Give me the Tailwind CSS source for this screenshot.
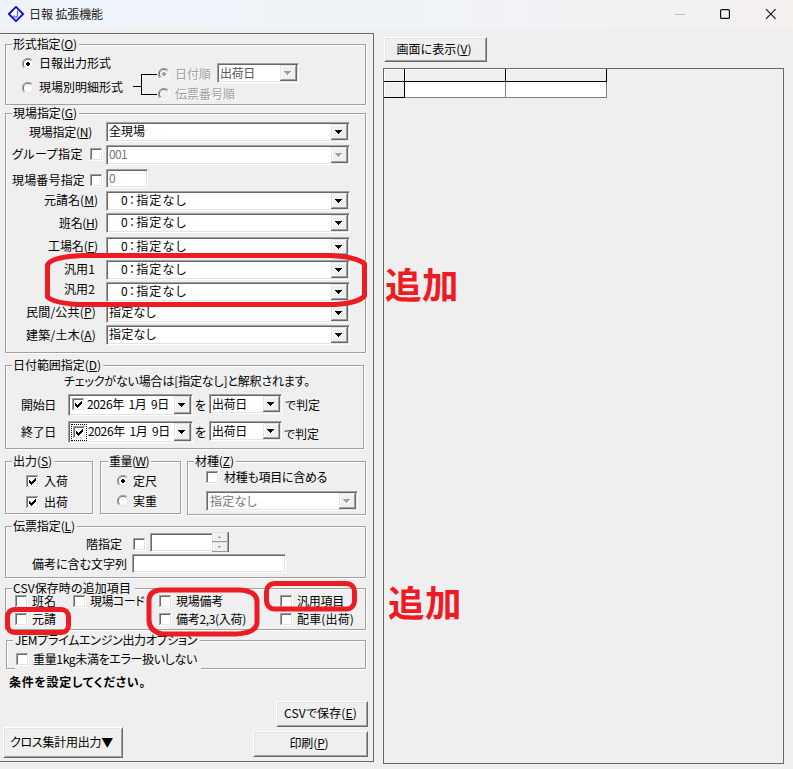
<!DOCTYPE html>
<html lang="ja">
<head>
<meta charset="utf-8">
<title>日報 拡張機能</title>
<script src="https://cdn.jsdelivr.net/npm/@tailwindcss/browser@4"></script>
</head>
<body class="relative flex h-[769px] w-[793px] flex-col overflow-hidden bg-[#efefef] font-['Noto_Sans_CJK_JP','Liberation_Sans',sans-serif] text-[12px] leading-[16px] whitespace-nowrap text-black [font-feature-settings:'palt'] [&_[data-w]]:whitespace-pre [&_button]:pr-[3px] [&_button]:pb-[2px]">

<!-- shared control glyphs -->
<svg class="hidden">
  <symbol id="btn" viewBox="0 0 17 16" preserveAspectRatio="none"><path fill="#696969" d="M0 0h17v16H0z"/><path fill="#e3e3e3" d="M0 0h16v15H0z"/><path fill="#a0a0a0" d="M1 1h15v14H1z"/><path fill="#fff" d="M1 1h14v13H1z"/><path fill="#efefef" d="M2 2h13v12H2z"/></symbol>
  <symbol id="dd" viewBox="0 0 17 16"><use href="#btn" width="17" height="16"/><path d="M4 6h7v1h-1v1h-1v1h-1v1h-1v-1h-1v-1h-1v-1h-1z" shape-rendering="crispEdges"/></symbol>
  <symbol id="ddoff" viewBox="0 0 17 16"><use href="#btn" width="17" height="16"/><path fill="#fff" d="M5 7h7v1h-1v1h-1v1h-1v1h-1v-1h-1v-1h-1v-1h-1z"/><path fill="#a0a0a0" d="M4 6h7v1h-1v1h-1v1h-1v1h-1v-1h-1v-1h-1v-1h-1z"/></symbol>
  <symbol id="cb" viewBox="0 0 13 13"><path fill="#fff" d="M0 0h13v13H0z"/><path fill="#a0a0a0" d="M0 0h12v1H1v11H0z"/><path fill="#e3e3e3" d="M11 1h1v11H1v-1h10z"/><path fill="#696969" d="M1 1h10v1H2v9H1z"/></symbol>
  <symbol id="cbon" viewBox="0 0 13 13"><use href="#cb" width="13" height="13"/><path d="M3 5h1v1h1v1h1v-1h1v-1h1v-1h1v-1h1v3h-1v1h-1v1h-1v1h-1v1h-1v-1h-1v-1h-1z"/></symbol>
  <symbol id="rb" viewBox="0 0 12 12"><circle cx="6" cy="6" r="5" fill="#fff"/><g fill="none"><path d="M1.9 10.1A5.5 5.5 0 0 1 10 1.9" stroke="#a0a0a0"/><path d="M2.6 9.2A4.6 4.6 0 0 1 9.2 2.7" stroke="#696969"/><path d="M2.6 9.4A4.8 4.8 0 0 0 9.4 2.6" stroke="#e3e3e3"/></g></symbol>
  <symbol id="rboff" viewBox="0 0 12 12"><circle cx="6" cy="6" r="5" fill="#efefef"/><g fill="none"><path d="M1.9 10.1A5.5 5.5 0 0 1 10 1.9" stroke="#a0a0a0"/><path d="M2.6 9.2A4.6 4.6 0 0 1 9.2 2.7" stroke="#696969"/><path d="M2.2 10A5.4 5.4 0 0 0 10 2.2" stroke="#fff"/></g></symbol>
  <symbol id="dot" viewBox="0 0 12 12"><path d="M5 4h2v1h1v2h-1v1h-2v-1h-1v-2h1z"/></symbol>
</svg>

<header class="flex h-[29px] shrink-0 items-center bg-linear-to-r from-[#eff4fa] via-[#eff3f8] to-[#f4f1ef] pl-[8px]">
  <svg class="-mt-[2px] h-[16px] w-[16px]" viewBox="0 0 16 16"><path d="M8 .9 15.1 8 8 15.1.9 8z" fill="#fff" stroke="#0a10c8" stroke-width="1.8" stroke-linejoin="round"/><path d="M9.5 4.5v4.800q0 1.900-1.800 1.900T5.800 9.400" fill="none" stroke="#5a5cf0" stroke-width="1.3"/></svg>
  <h1 class="-mt-[2px] ml-[5px] text-[12px] text-[#222]" data-w="74">日報 拡張機能</h1>
  <svg class="-mt-[2px] ml-auto h-[12px] w-[118px]" viewBox="0 0 118 12" fill="none"><path d="M0 6.500h10" stroke="#bdbdbd"/><rect x="45.600" y="1.600" width="8.800" height="8.800" rx="1" stroke="#111" stroke-width="1.200"/><path d="m91 1.200 9.600 9.600m0-9.600L91 10.800" stroke="#111" stroke-width="1.100"/></svg>
</header>

<div class="flex flex-1 items-start">
  <!-- conditions -->
  <main class="mt-[4px] h-[729px] w-[374px] border border-l-0 border-[#696969] pt-[2px]">

    <fieldset class="ml-[5px] h-[69px] w-[361px] border border-[#a0a0a0] shadow-[1px_1px_#fff,inset_1px_1px_#fff]">
      <legend class="ml-[6px] h-[17px] bg-[#efefef] pr-[2px] pl-px"><span data-w="64">形式指定(<u>O</u>)</span></legend>
      <div class="flex">
        <div class="w-[127px] pt-[2px] pl-[16px]">
          <label class="flex h-[24px] items-start gap-[5px]"><svg class="mt-[3px] h-[12px] w-[12px]"><use href="#rb"/><use href="#dot"/></svg><span data-w="72">日報出力形式</span></label>
          <label class="flex h-[16px] items-start gap-[5px]"><svg class="mt-[3px] h-[12px] w-[12px]"><use href="#rb"/></svg><span data-w="84">現場別明細形式</span></label>
        </div>
        <svg class="mt-[20px] h-[22px] w-[25px]" viewBox="0 0 25 22" shape-rendering="crispEdges"><path d="M0 13h8v1H0zM8 1h16v1H9v19h15v1H8z"/></svg>
        <div class="pt-[10px] text-[#a0a0a0]">
          <div class="flex h-[20px] items-start">
            <svg class="mt-[5px] h-[12px] w-[12px] text-[#a0a0a0]"><use href="#rboff"/><use href="#dot" fill="#a0a0a0"/></svg>
            <span class="mt-[3px] ml-[5px] w-[42px] [text-shadow:1px_1px_#fff]"><span data-w="36">日付順</span></span>
            <div class="flex h-[20px] w-[82px] justify-between border border-[#a0a0a0] border-r-white border-b-white bg-white pt-px pr-px pl-[2px] text-[#555] shadow-[inset_1px_1px_#696969,inset_-1px_-1px_#e3e3e3]"><span data-w="35">出荷日</span><svg class="h-[16px] w-[17px]"><use href="#ddoff"/></svg></div>
          </div>
          <div class="flex h-[20px] items-start">
            <svg class="mt-[5px] h-[12px] w-[12px]"><use href="#rboff"/></svg>
            <span class="mt-[3px] ml-[5px] [text-shadow:1px_1px_#fff]" data-w="60">伝票番号順</span>
          </div>
        </div>
      </div>
    </fieldset>

    <fieldset class="ml-[5px] h-[248px] w-[361px] border border-[#a0a0a0] shadow-[1px_1px_#fff,inset_1px_1px_#fff]">
      <legend class="ml-[6px] h-[17px] bg-[#efefef] pr-[2px] pl-px"><span data-w="64">現場指定(<u>G</u>)</span></legend>
      <div class="flex h-[23px] items-start">
        <div class="mt-[2px] w-[100px] pr-[14px] text-right"><span data-w="63">現場指定(<u>N</u>)</span></div>
        <div class="flex h-[20px] w-[244px] justify-between border border-[#a0a0a0] border-r-white border-b-white bg-white pt-px pr-px pl-[2px] shadow-[inset_1px_1px_#696969,inset_-1px_-1px_#e3e3e3]"><span class="-mt-px" data-w="36">全現場</span><svg class="h-[16px] w-[17px]"><use href="#dd"/></svg></div>
      </div>
      <div class="flex h-[24px] items-start">
        <div class="mt-px w-[84px] pl-[6px]"><span data-w="71">グループ指定</span></div><svg class="mt-[3px] mr-[3px] h-[13px] w-[13px]"><use href="#cb"/></svg>
        <div class="flex h-[20px] w-[244px] justify-between border border-[#a0a0a0] border-r-white border-b-white bg-white pt-px pr-px pl-[2px] text-[#777] shadow-[inset_1px_1px_#696969,inset_-1px_-1px_#e3e3e3]"><span class="-mt-px" data-w="18">001</span><svg class="h-[16px] w-[17px]"><use href="#ddoff"/></svg></div>
      </div>
      <div class="flex h-[22px] items-start">
        <div class="mt-[3px] w-[84px] pl-[6px]"><span data-w="73">現場番号指定</span></div><svg class="mt-[5px] mr-[3px] h-[13px] w-[13px]"><use href="#cb"/></svg>
        <div class="h-[19px] w-[42px] border border-[#a0a0a0] border-r-white border-b-white bg-white pl-[2px] text-[#777] shadow-[inset_1px_1px_#696969,inset_-1px_-1px_#e3e3e3]"><span data-w="6">0</span></div>
      </div>
      <div class="flex h-[22px] items-start">
        <div class="mt-px w-[100px] pr-[8px] text-right"><span data-w="54">元請名(<u>M</u>)</span></div>
        <div class="flex h-[20px] w-[244px] justify-between border border-[#a0a0a0] border-r-white border-b-white bg-white pt-px pr-px pl-[14px] shadow-[inset_1px_1px_#696969,inset_-1px_-1px_#e3e3e3]"><span class="-mt-px" data-w="66">0：指定なし</span><svg class="h-[16px] w-[17px]"><use href="#dd"/></svg></div>
      </div>
      <div class="flex h-[24px] items-start">
        <div class="mt-[2px] w-[100px] pr-[8px] text-right"><span data-w="39">班名(<u>H</u>)</span></div>
        <div class="flex h-[20px] w-[244px] justify-between border border-[#a0a0a0] border-r-white border-b-white bg-white pt-px pr-px pl-[14px] shadow-[inset_1px_1px_#696969,inset_-1px_-1px_#e3e3e3]"><span class="-mt-px" data-w="66">0：指定なし</span><svg class="h-[16px] w-[17px]"><use href="#dd"/></svg></div>
      </div>
      <div class="flex h-[23px] items-start">
        <div class="mt-px w-[100px] pr-[8px] text-right"><span data-w="50">工場名(<u>F</u>)</span></div>
        <div class="flex h-[20px] w-[244px] justify-between border border-[#a0a0a0] border-r-white border-b-white bg-white pt-px pr-px pl-[14px] shadow-[inset_1px_1px_#696969,inset_-1px_-1px_#e3e3e3]"><span class="-mt-px" data-w="66">0：指定なし</span><svg class="h-[16px] w-[17px]"><use href="#dd"/></svg></div>
      </div>
      <div class="flex h-[22px] items-start">
        <div class="mt-px w-[100px] pr-[11px] text-right"><span data-w="31">汎用1</span></div>
        <div class="flex h-[20px] w-[244px] justify-between border border-[#a0a0a0] border-r-white border-b-white bg-white pt-px pr-px pl-[14px] shadow-[inset_1px_1px_#696969,inset_-1px_-1px_#e3e3e3]"><span class="-mt-px" data-w="66">0：指定なし</span><svg class="h-[16px] w-[17px]"><use href="#dd"/></svg></div>
      </div>
      <div class="flex h-[21px] items-start">
        <div class="-mt-px w-[100px] pr-[11px] text-right"><span data-w="31">汎用2</span></div>
        <div class="flex h-[20px] w-[244px] justify-between border border-[#a0a0a0] border-r-white border-b-white bg-white pt-px pr-px pl-[14px] shadow-[inset_1px_1px_#696969,inset_-1px_-1px_#e3e3e3]"><span class="-mt-px" data-w="66">0：指定なし</span><svg class="h-[16px] w-[17px]"><use href="#dd"/></svg></div>
      </div>
      <div class="flex h-[22px] items-start">
        <div class="mt-px w-[100px] pr-[10px] text-right"><span data-w="70">民間/公共(<u>P</u>)</span></div>
        <div class="flex h-[20px] w-[244px] justify-between border border-[#a0a0a0] border-r-white border-b-white bg-white pt-px pr-px pl-[2px] shadow-[inset_1px_1px_#696969,inset_-1px_-1px_#e3e3e3]"><span class="-mt-px" data-w="47">指定なし</span><svg class="h-[16px] w-[17px]"><use href="#dd"/></svg></div>
      </div>
      <div class="flex h-[20px] items-start">
        <div class="mt-[2px] w-[100px] pr-[10px] text-right"><span data-w="70">建築/土木(<u>A</u>)</span></div>
        <div class="flex h-[20px] w-[244px] justify-between border border-[#a0a0a0] border-r-white border-b-white bg-white pt-px pr-px pl-[2px] shadow-[inset_1px_1px_#696969,inset_-1px_-1px_#e3e3e3]"><span class="-mt-px" data-w="47">指定なし</span><svg class="h-[16px] w-[17px]"><use href="#dd"/></svg></div>
      </div>
    </fieldset>

    <fieldset class="mt-[4px] ml-[5px] h-[92px] w-[359px] border border-[#a0a0a0] shadow-[1px_1px_#fff,inset_1px_1px_#fff]">
      <legend class="ml-[6px] h-[17px] bg-[#efefef] pr-[2px] pl-px"><span data-w="88">日付範囲指定(<u>D</u>)</span></legend>
      <p class="-mt-px h-[21px] pl-[58px]"><span data-w="246">チェックがない場合は[指定なし]と解釈されます。</span></p>
      <div class="flex h-[27px] items-start">
        <div class="mt-[3px] w-[62px] pl-[15px]"><span data-w="35">開始日</span></div>
        <div class="flex h-[22px] w-[125px] border border-[#a0a0a0] border-r-white border-b-white bg-white pt-px pr-px pl-[3px] shadow-[inset_1px_1px_#696969,inset_-1px_-1px_#e3e3e3]"><svg class="mt-[2px] mr-[2px] h-[13px] w-[13px]"><use href="#cbon"/></svg><span data-w="82">2026年  1月  9日</span><svg class="ml-auto h-[18px] w-[17px]"><use href="#btn" width="17" height="18"/><use href="#dd" y="1" class="[clip-path:inset(3px)]" width="17" height="16"/></svg></div>
        <div class="mt-[3px] w-[16px] pl-[2px]"><span data-w="11">を</span></div>
        <div class="flex h-[20px] w-[73px] justify-between border border-[#a0a0a0] border-r-white border-b-white bg-white pt-px pr-px pl-[2px] shadow-[inset_1px_1px_#696969,inset_-1px_-1px_#e3e3e3]"><span data-w="35">出荷日</span><svg class="h-[16px] w-[17px]"><use href="#dd"/></svg></div>
        <div class="mt-[3px] pl-[3px]"><span data-w="35">で判定</span></div>
      </div>
      <div class="flex h-[27px] items-start">
        <div class="mt-[3px] w-[62px] pl-[15px]"><span data-w="35">終了日</span></div>
        <div class="flex h-[22px] w-[125px] border border-[#a0a0a0] border-r-white border-b-white bg-white pt-px pr-px pl-[2px] shadow-[inset_1px_1px_#696969,inset_-1px_-1px_#e3e3e3]"><span class="mt-px h-[17px] w-[16px] border border-dotted border-black pt-px pl-px"><svg class="h-[13px] w-[13px]"><use href="#cbon"/></svg></span><span class="ml-px" data-w="82">2026年  1月  9日</span><svg class="ml-auto h-[18px] w-[17px]"><use href="#btn" width="17" height="18"/><use href="#dd" y="1" class="[clip-path:inset(3px)]" width="17" height="16"/></svg></div>
        <div class="mt-[3px] w-[16px] pl-[2px]"><span data-w="11">を</span></div>
        <div class="flex h-[20px] w-[73px] justify-between border border-[#a0a0a0] border-r-white border-b-white bg-white pt-px pr-px pl-[2px] shadow-[inset_1px_1px_#696969,inset_-1px_-1px_#e3e3e3]"><span data-w="35">出荷日</span><svg class="h-[16px] w-[17px]"><use href="#dd"/></svg></div>
        <div class="mt-[5px] pl-[2px]"><span data-w="35">で判定</span></div>
      </div>
    </fieldset>

    <div class="mt-[4px] ml-[5px] flex h-[62px] items-start">
      <fieldset class="h-[61px] w-[88px] border border-[#a0a0a0] shadow-[1px_1px_#fff,inset_1px_1px_#fff]">
        <legend class="ml-[6px] h-[17px] bg-[#efefef] pr-[2px] pl-px"><span data-w="39">出力(<u>S</u>)</span></legend>
        <label class="flex h-[21px] items-start gap-[5px] pt-[3px] pl-[20px]"><svg class="mt-[2px] h-[13px] w-[13px]"><use href="#cbon"/></svg><span data-w="24">入荷</span></label>
        <label class="flex h-[21px] items-start gap-[5px] pt-[3px] pl-[20px]"><svg class="mt-[2px] h-[13px] w-[13px]"><use href="#cbon"/></svg><span data-w="24">出荷</span></label>
      </fieldset>
      <fieldset class="ml-[7px] h-[61px] w-[81px] border border-[#a0a0a0] shadow-[1px_1px_#fff,inset_1px_1px_#fff]">
        <legend class="ml-[7px] h-[17px] bg-[#efefef] pr-[2px] pl-px"><span data-w="40">重量(<u>W</u>)</span></legend>
        <label class="flex h-[20px] items-start gap-[4px] pt-[3px] pl-[16px]"><svg class="mt-[2px] h-[12px] w-[12px]"><use href="#rb"/><use href="#dot"/></svg><span data-w="24">定尺</span></label>
        <label class="flex h-[20px] items-start gap-[4px] pt-[3px] pl-[16px]"><svg class="mt-[2px] h-[12px] w-[12px]"><use href="#rb"/></svg><span data-w="24">実重</span></label>
      </fieldset>
      <fieldset class="ml-[6px] h-[62px] w-[179px] border border-[#a0a0a0] shadow-[1px_1px_#fff,inset_1px_1px_#fff]">
        <legend class="ml-[6px] h-[17px] bg-[#efefef] pr-[2px] pl-px"><span data-w="39">材種(<u>Z</u>)</span></legend>
        <label class="-mt-px flex h-[22px] items-start gap-[5px] pl-[18px]"><svg class="mt-[2px] h-[13px] w-[13px]"><use href="#cb"/></svg><span data-w="103">材種も項目に含める</span></label>
        <div class="ml-[18px] flex h-[20px] w-[152px] justify-between border border-[#a0a0a0] border-r-white border-b-white bg-white pt-px pr-px pl-[3px] text-[#777] shadow-[inset_1px_1px_#696969,inset_-1px_-1px_#e3e3e3]"><span data-w="47">指定なし</span><svg class="h-[16px] w-[17px]"><use href="#ddoff"/></svg></div>
      </fieldset>
    </div>

    <fieldset class="mt-[3px] ml-[5px] h-[60px] w-[361px] border border-[#a0a0a0] shadow-[1px_1px_#fff,inset_1px_1px_#fff]">
      <legend class="ml-[6px] h-[17px] bg-[#efefef] pr-[2px] pl-px"><span data-w="62">伝票指定(<u>L</u>)</span></legend>
      <div class="-mt-[3px] flex h-[22px] items-start">
        <div class="mt-[4px] w-[127px] pl-[80px]"><span data-w="36">階指定</span></div>
        <svg class="mt-[6px] h-[13px] w-[13px]"><use href="#cb"/></svg>
        <div class="mt-px ml-[4px] h-[19px] w-[62px] border border-r-0 border-[#a0a0a0] border-b-white bg-white shadow-[inset_1px_1px_#696969,inset_0_-1px_#e3e3e3]"></div>
        <svg class="h-[20px] w-[17px]" viewBox="0 0 17 20"><use href="#btn" width="17" height="10"/><use href="#btn" y="10" width="17" height="10"/><path fill="#a0a0a0" d="M7 4h1v1h1v1H6V5h1zM6 14h3v1H8v1H7v-1H6z"/></svg>
      </div>
      <div class="flex items-start">
        <div class="mt-[2px] w-[126px] pl-[26px]"><span data-w="95">備考に含む文字列</span></div>
        <div class="h-[19px] w-[154px] border border-[#a0a0a0] border-r-white border-b-white bg-white shadow-[inset_1px_1px_#696969,inset_-1px_-1px_#e3e3e3]"></div>
      </div>
    </fieldset>

    <fieldset class="mt-[2px] ml-[5px] h-[50px] w-[361px] border border-[#a0a0a0] shadow-[1px_1px_#fff,inset_1px_1px_#fff]">
      <legend class="ml-[6px] h-[17px] bg-[#efefef] pr-[4px] pl-px"><span data-w="118">CSV保存時の追加項目</span></legend>
      <div class="-mt-[4px] grid grid-cols-[58px_86px_121px_80px] pl-[9px]">
        <label class="flex h-[18px] items-start gap-[4px]"><svg class="mt-[2px] h-[13px] w-[13px]"><use href="#cb"/></svg><span data-w="24">班名</span></label>
        <label class="flex h-[18px] items-start gap-[4px]"><svg class="mt-[2px] h-[13px] w-[13px]"><use href="#cb"/></svg><span data-w="54">現場コード</span></label>
        <label class="flex h-[18px] items-start gap-[4px]"><svg class="mt-[2px] h-[13px] w-[13px]"><use href="#cb"/></svg><span data-w="47">現場備考</span></label>
        <label class="flex h-[18px] items-start gap-[4px]"><svg class="mt-[2px] h-[13px] w-[13px]"><use href="#cb"/></svg><span data-w="47">汎用項目</span></label>
        <label class="col-span-2 flex h-[18px] items-start gap-[4px]"><svg class="mt-[2px] h-[13px] w-[13px]"><use href="#cb"/></svg><span data-w="24">元請</span></label>
        <label class="flex h-[18px] items-start gap-[4px]"><svg class="mt-[2px] h-[13px] w-[13px]"><use href="#cb"/></svg><span data-w="70">備考2,3(入荷)</span></label>
        <label class="flex h-[18px] items-start gap-[4px]"><svg class="mt-[2px] h-[13px] w-[13px]"><use href="#cb"/></svg><span data-w="57">配車(出荷)</span></label>
      </div>
    </fieldset>

    <fieldset class="mt-[2px] ml-[6px] h-[37px] w-[360px] border border-[#a0a0a0] shadow-[1px_1px_#fff,inset_1px_1px_#fff]">
      <legend class="ml-[6px] h-[17px] bg-[#efefef] pr-[3px] pl-[2px]"><span data-w="182">JEMプライムエンジン出力オプション</span></legend>
      <label class="ml-[8px] flex h-[21px] w-[186px] items-start gap-[4px] bg-[#efefef] pt-[2px] pl-px"><svg class="mt-[2px] h-[13px] w-[13px]"><use href="#cb"/></svg><span data-w="164">重量1kg未満をエラー扱いしない</span></label>
    </fieldset>

    <p class="mt-[5px] h-[27px] pl-[9px] font-bold"><span data-w="137">条件を設定してください。</span></p>

    <div class="flex items-end justify-between pr-[5px] pl-[3px]">
      <button class="-mb-px h-[31px] w-[120px] border border-white border-r-[#696969] border-b-[#696969] text-center shadow-[inset_1px_1px_#e3e3e3,inset_-1px_-1px_#a0a0a0]"><span data-w="103">クロス集計用出力▼</span></button>
      <div class="flex flex-col items-end gap-[4px]">
        <button class="h-[26px] w-[92px] border border-white border-r-[#696969] border-b-[#696969] text-center shadow-[inset_1px_1px_#e3e3e3,inset_-1px_-1px_#a0a0a0]"><span data-w="73">CSVで保存(<u>E</u>)</span></button>
        <button class="h-[26px] w-[115px] border border-white border-r-[#696969] border-b-[#696969] text-center shadow-[inset_1px_1px_#e3e3e3,inset_-1px_-1px_#a0a0a0]"><span data-w="39">印刷(<u>P</u>)</span></button>
      </div>
    </div>
  </main>

  <!-- result list -->
  <section class="ml-[9px] pt-[8px]">
    <button class="ml-px block h-[25px] w-[103px] border border-white border-r-[#696969] border-b-[#696969] text-center shadow-[inset_1px_1px_#e3e3e3,inset_-1px_-1px_#a0a0a0]"><span data-w="75">画面に表示(<u>V</u>)</span></button>
    <div class="mt-[6px] h-[696px] w-[401px] border border-[#696969]">
      <div class="grid w-[223px] grid-cols-[21px_101px_101px] grid-rows-[13px_16px]">
        <div class="border-r border-b border-black shadow-[inset_1px_1px_#fff]"></div>
        <div class="border-r border-b border-black shadow-[inset_1px_1px_#fff]"></div>
        <div class="border-r border-b border-black shadow-[inset_1px_1px_#fff]"></div>
        <div class="border-r border-b border-black shadow-[inset_1px_1px_#fff]"></div>
        <div class="border-r border-b border-[#808080] bg-white"></div>
        <div class="border-r border-b border-[#808080] bg-white"></div>
      </div>
    </div>
  </section>
</div>

<!-- red annotations over the window -->
<svg class="pointer-events-none absolute inset-0" width="793" height="769" fill="none" stroke="#ed1c24" stroke-width="5" stroke-linejoin="round">
  <path d="M82 255.500H330Q358 257 364.500 264V296Q358 303 335 304.500H78Q54 303 47.500 297V265Q51 257 82 255.500Z"/>
  <rect x="7.500" y="609.500" width="61" height="23" rx="7"/>
  <path d="M160 590H240Q257 591 257 602V622Q257 633 236 634H162Q149 631 149 620V601Q149 591 160 590Z"/>
  <rect x="266.500" y="583.500" width="88" height="25.500" rx="8"/>
</svg>
<div class="absolute top-[259px] left-[385px] text-[36.500px] leading-[50px] font-bold text-[#ed1c24]"><span data-w="74">追加</span></div>
<div class="absolute top-[577px] left-[388px] text-[36.500px] leading-[50px] font-bold text-[#ed1c24]"><span data-w="74">追加</span></div>

<script>
  // Spread each caption over its nominal width
  function fitCaptions() {
    document.querySelectorAll('[data-w]').forEach(el => {
      el.style.letterSpacing = '0px';
      const range = document.createRange();
      range.selectNodeContents(el);
      const n = el.textContent.length;
      el.style.letterSpacing = (el.dataset.w - range.getBoundingClientRect().width) / n + 'px';
    });
  }
  fitCaptions();
  addEventListener('load', fitCaptions);
  document.fonts.ready.then(fitCaptions);
  requestAnimationFrame(() => requestAnimationFrame(fitCaptions));
</script>
</body>
</html>
